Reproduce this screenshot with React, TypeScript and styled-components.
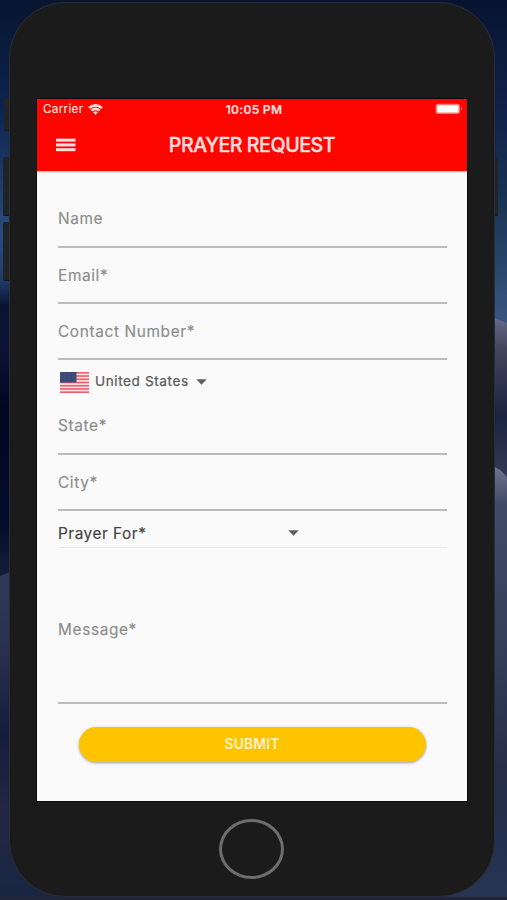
import React from 'react';
import styled, { createGlobalStyle } from 'styled-components';

const GlobalStyle = createGlobalStyle`
  * { box-sizing: border-box; }
  body { margin: 0; background: #0b1634; font-family: Inter, "Liberation Sans", sans-serif; }
`;

const Desktop = styled.div`
  position: relative;
  width: 507px;
  height: 900px;
  padding: 2px 12px 3px 9px;
  overflow: hidden;
`;

const Wallpaper = styled.svg`
  position: absolute;
  inset: 0;
  width: 100%;
  height: 100%;
`;

const SideButton = styled.span<{ $side: 'left' | 'right'; $top: number; $height: number; $width: number }>`
  position: absolute;
  ${(p) => (p.$side === 'left' ? `left: ${10 - p.$width}px` : 'left: 493px')};
  top: ${(p) => p.$top}px;
  width: ${(p) => p.$width}px;
  height: ${(p) => p.$height}px;
  border-radius: ${(p) => (p.$side === 'left' ? '2px 0 0 2px' : '0 2px 2px 0')};
  background: #222324;
  border-bottom: 1px solid #131519;
`;

const Phone = styled.main`
  position: relative;
  display: flex;
  flex-direction: column;
  align-items: center;
  width: 486px;
  height: 895px;
  padding: 95px 26px 0;
  border: 1px solid #292e36;
  border-radius: 56px;
  background: #1b1b1b;
`;

const Screen = styled.section`
  display: flex;
  flex-direction: column;
  width: 432px;
  height: 704px;
  flex: none;
  border: 1px solid #0c0c0c;
  background: #fafafa;
`;

const AppHeader = styled.header`
  flex: none;
  height: 72.4px;
  background: #ff0500;
  color: #ffdede;
  box-shadow: 0 1px 2px rgba(0, 0, 0, 0.3);
`;

const StatusBar = styled.div`
  display: grid;
  grid-template-columns: 1fr auto 1fr;
  align-items: center;
  height: 20px;
  padding: 0 4px 0 6px;
  font-size: 11.8px;
  letter-spacing: 0.25px;
  -webkit-text-stroke: 0.2px #ffdede;
`;

const Carrier = styled.div`
  display: flex;
  align-items: center;
  gap: 5px;
`;

const Clock = styled.span`
  font-size: 12px;
  font-weight: 600;
  letter-spacing: 0.3px;
  padding-left: 2px;
`;

const BatteryIcon = styled.svg`
  justify-self: end;
`;

const TitleBar = styled.div`
  display: grid;
  grid-template-columns: 1fr auto 1fr;
  align-items: center;
  height: 52px;
  padding: 0 19px;
`;

const Title = styled.h1`
  margin: 0;
  font-size: 19.6px;
  font-weight: 500;
  letter-spacing: -0.43px;
  -webkit-text-stroke: 0.4px #ffdede;
  white-space: nowrap;
`;

const Form = styled.form`
  display: flex;
  flex-direction: column;
  padding: 20.1px 20px 0 21px;
`;

const Field = styled.label<{ $height?: number; $labelTop?: number }>`
  display: block;
  height: ${(p) => p.$height ?? 56.3}px;
  padding-top: ${(p) => p.$labelTop ?? 18}px;
  border-bottom: 2px solid #bcbcbc;
  color: #8c8c8c;
  font-size: 15.4px;
  line-height: 20px;
  letter-spacing: 0.63px;
  -webkit-text-stroke: 0.15px #8c8c8c;
`;

const CountryRow = styled.div`
  display: flex;
  align-items: center;
  height: 38px;
  padding: 6px 0 0 2px;
  color: #585858;
  font-size: 13.6px;
  letter-spacing: 0.58px;
  -webkit-text-stroke: 0.2px #585858;
`;

const CountryName = styled.span`
  margin: 0 7px 2px 6px;
`;

const PrayerSelect = styled.div`
  display: flex;
  align-items: center;
  height: 37.5px;
  padding-top: 8px;
  border-bottom: 1px solid #e9e9e9;
  color: #424242;
  font-size: 15.4px;
  letter-spacing: 0.52px;
  -webkit-text-stroke: 0.15px #424242;
`;

const PrayerLabel = styled.span`
  width: 230px;
`;

const SubmitButton = styled.button`
  align-self: center;
  width: 347px;
  height: 35px;
  margin: 23.5px 0 0;
  padding: 0 1px 1.5px 0;
  border: 0;
  border-radius: 18px;
  background: #ffc400;
  box-shadow: 0 1px 3px rgba(0, 0, 0, 0.38);
  color: #fff3c8;
  font: 600 13.8px Inter, sans-serif;
  letter-spacing: 0.2px;
`;

const HomeButton = styled.span`
  width: 65px;
  height: 60px;
  margin: 16.5px 2px 0 0;
  border: 3px solid #6e6e6e;
  border-radius: 50%;
`;

const Hills = () => (
  <Wallpaper viewBox="0 0 507 900" preserveAspectRatio="none">
    <defs>
      <linearGradient id="skyLeft" x2="0" y2="1">
        <stop offset="0" stopColor="#07152f" />
        <stop offset="0.12" stopColor="#0d2350" />
        <stop offset="0.26" stopColor="#2a4c80" />
        <stop offset="0.31" stopColor="#203c6c" />
        <stop offset="0.34" stopColor="#091331" />
        <stop offset="0.39" stopColor="#0c1337" />
        <stop offset="0.45" stopColor="#020621" />
        <stop offset="0.58" stopColor="#030d2b" />
        <stop offset="0.64" stopColor="#151d38" />
      </linearGradient>
      <linearGradient id="skyRight" x2="0" y2="1">
        <stop offset="0" stopColor="#071431" />
        <stop offset="0.12" stopColor="#10224a" />
        <stop offset="0.22" stopColor="#183353" />
        <stop offset="0.35" stopColor="#38537f" />
      </linearGradient>
      <linearGradient id="duneLeft" x2="0" y2="1">
        <stop offset="0" stopColor="#303a57" />
        <stop offset="0.25" stopColor="#282f4f" />
        <stop offset="0.5" stopColor="#151d3e" />
        <stop offset="0.75" stopColor="#242744" />
        <stop offset="1" stopColor="#172641" />
      </linearGradient>
      <linearGradient id="duneTop" x2="0" y2="1">
        <stop offset="0" stopColor="#66698a" />
        <stop offset="0.2" stopColor="#44465f" />
        <stop offset="0.6" stopColor="#1b2440" />
        <stop offset="1" stopColor="#353b56" />
      </linearGradient>
      <linearGradient id="duneBottom" x2="0" y2="1">
        <stop offset="0" stopColor="#6f7691" />
        <stop offset="0.09" stopColor="#414a66" />
        <stop offset="0.4" stopColor="#37405b" />
        <stop offset="0.7" stopColor="#252d47" />
        <stop offset="1" stopColor="#263553" />
      </linearGradient>
    </defs>
    <rect width="254" height="900" fill="url(#skyLeft)" />
    <rect x="254" width="253" height="900" fill="url(#skyRight)" />
    <path d="M0 576L12 571H254V900H0Z" fill="url(#duneLeft)" />
    <path d="M490 316L507 323V480H490Z" fill="url(#duneTop)" />
    <path d="M254 465H490Q500 468 507 477V900H254Z" fill="url(#duneBottom)" />
    <rect y="897" width="507" height="3" fill="#222438" />
  </Wallpaper>
);

const WifiIcon = () => (
  <svg width="15" height="11" viewBox="0 0 15 11" fill="none" stroke="#ffdede" strokeWidth="2.5">
    <path d="M1 4Q7.5 -1.3 14 4" />
    <path d="M3.4 6.6Q7.5 3.2 11.6 6.6" />
    <path d="M5.2 8.2Q7.5 6.4 9.8 8.2L7.5 10.8Z" fill="#ffdede" stroke="none" />
  </svg>
);

const Battery = () => (
  <BatteryIcon width="28" height="12" viewBox="0 0 28 12">
    <rect x="0.5" y="0.7" width="24.5" height="10.3" rx="2.5" fill="#ff7770" />
    <rect x="2" y="2.2" width="21.5" height="7.4" rx="1" fill="#fff" />
    <path d="M26 4.2Q28 5.8 26 7.6Z" fill="#ff8a84" />
  </BatteryIcon>
);

const MenuIcon = () => (
  <svg width="20" height="14" viewBox="0 0 20 14" fill="#ffdede">
    <rect y="0.6" width="19.5" height="3" />
    <rect y="5.4" width="19.5" height="3" />
    <rect y="10.2" width="19.5" height="3" />
  </svg>
);

const stripes = [0, 1, 2, 3, 4, 5, 6];

const Flag = () => (
  <svg width="29" height="21" viewBox="0 0 29 21">
    <rect width="29" height="21" fill="#ffe3e6" />
    {stripes.map((i) => (
      <rect key={i} y={i * 3.23} width="29" height="1.62" fill="#ed5d6c" />
    ))}
    <rect width="16.5" height="10.5" fill="#3c4977" />
    {[2, 5, 8].map((y) => (
      <path key={y} d={`M1.5 ${y}H16`} stroke="#56618c" strokeWidth="0.7" strokeDasharray="0.8 1.8" />
    ))}
  </svg>
);

const Caret = () => (
  <svg width="11" height="6" viewBox="0 0 11 6" fill="#5e5e5e">
    <path d="M0.3 0.3H10.7L5.5 5.7Z" />
  </svg>
);

export default function App() {
  return (
    <>
      <GlobalStyle />
      <Desktop>
        <Hills />
        <SideButton $side="left" $top={98} $height={33} $width={6} />
        <SideButton $side="left" $top={157} $height={59} $width={7} />
        <SideButton $side="left" $top={222} $height={59} $width={7} />
        <SideButton $side="right" $top={158} $height={58} $width={5} />
        <Phone>
          <Screen>
            <AppHeader>
              <StatusBar>
                <Carrier>
                  <span>Carrier</span>
                  <WifiIcon />
                </Carrier>
                <Clock>10:05 PM</Clock>
                <Battery />
              </StatusBar>
              <TitleBar>
                <MenuIcon />
                <Title>PRAYER REQUEST</Title>
              </TitleBar>
            </AppHeader>
            <Form>
              <Field>Name</Field>
              <Field>Email*</Field>
              <Field>Contact Number*</Field>
              <CountryRow>
                <Flag />
                <CountryName>United States</CountryName>
                <Caret />
              </CountryRow>
              <Field>State*</Field>
              <Field>City*</Field>
              <PrayerSelect>
                <PrayerLabel>Prayer For*</PrayerLabel>
                <Caret />
              </PrayerSelect>
              <Field $height={155.5} $labelTop={71.5}>Message*</Field>
              <SubmitButton type="button">SUBMIT</SubmitButton>
            </Form>
          </Screen>
          <HomeButton />
        </Phone>
      </Desktop>
    </>
  );
}
